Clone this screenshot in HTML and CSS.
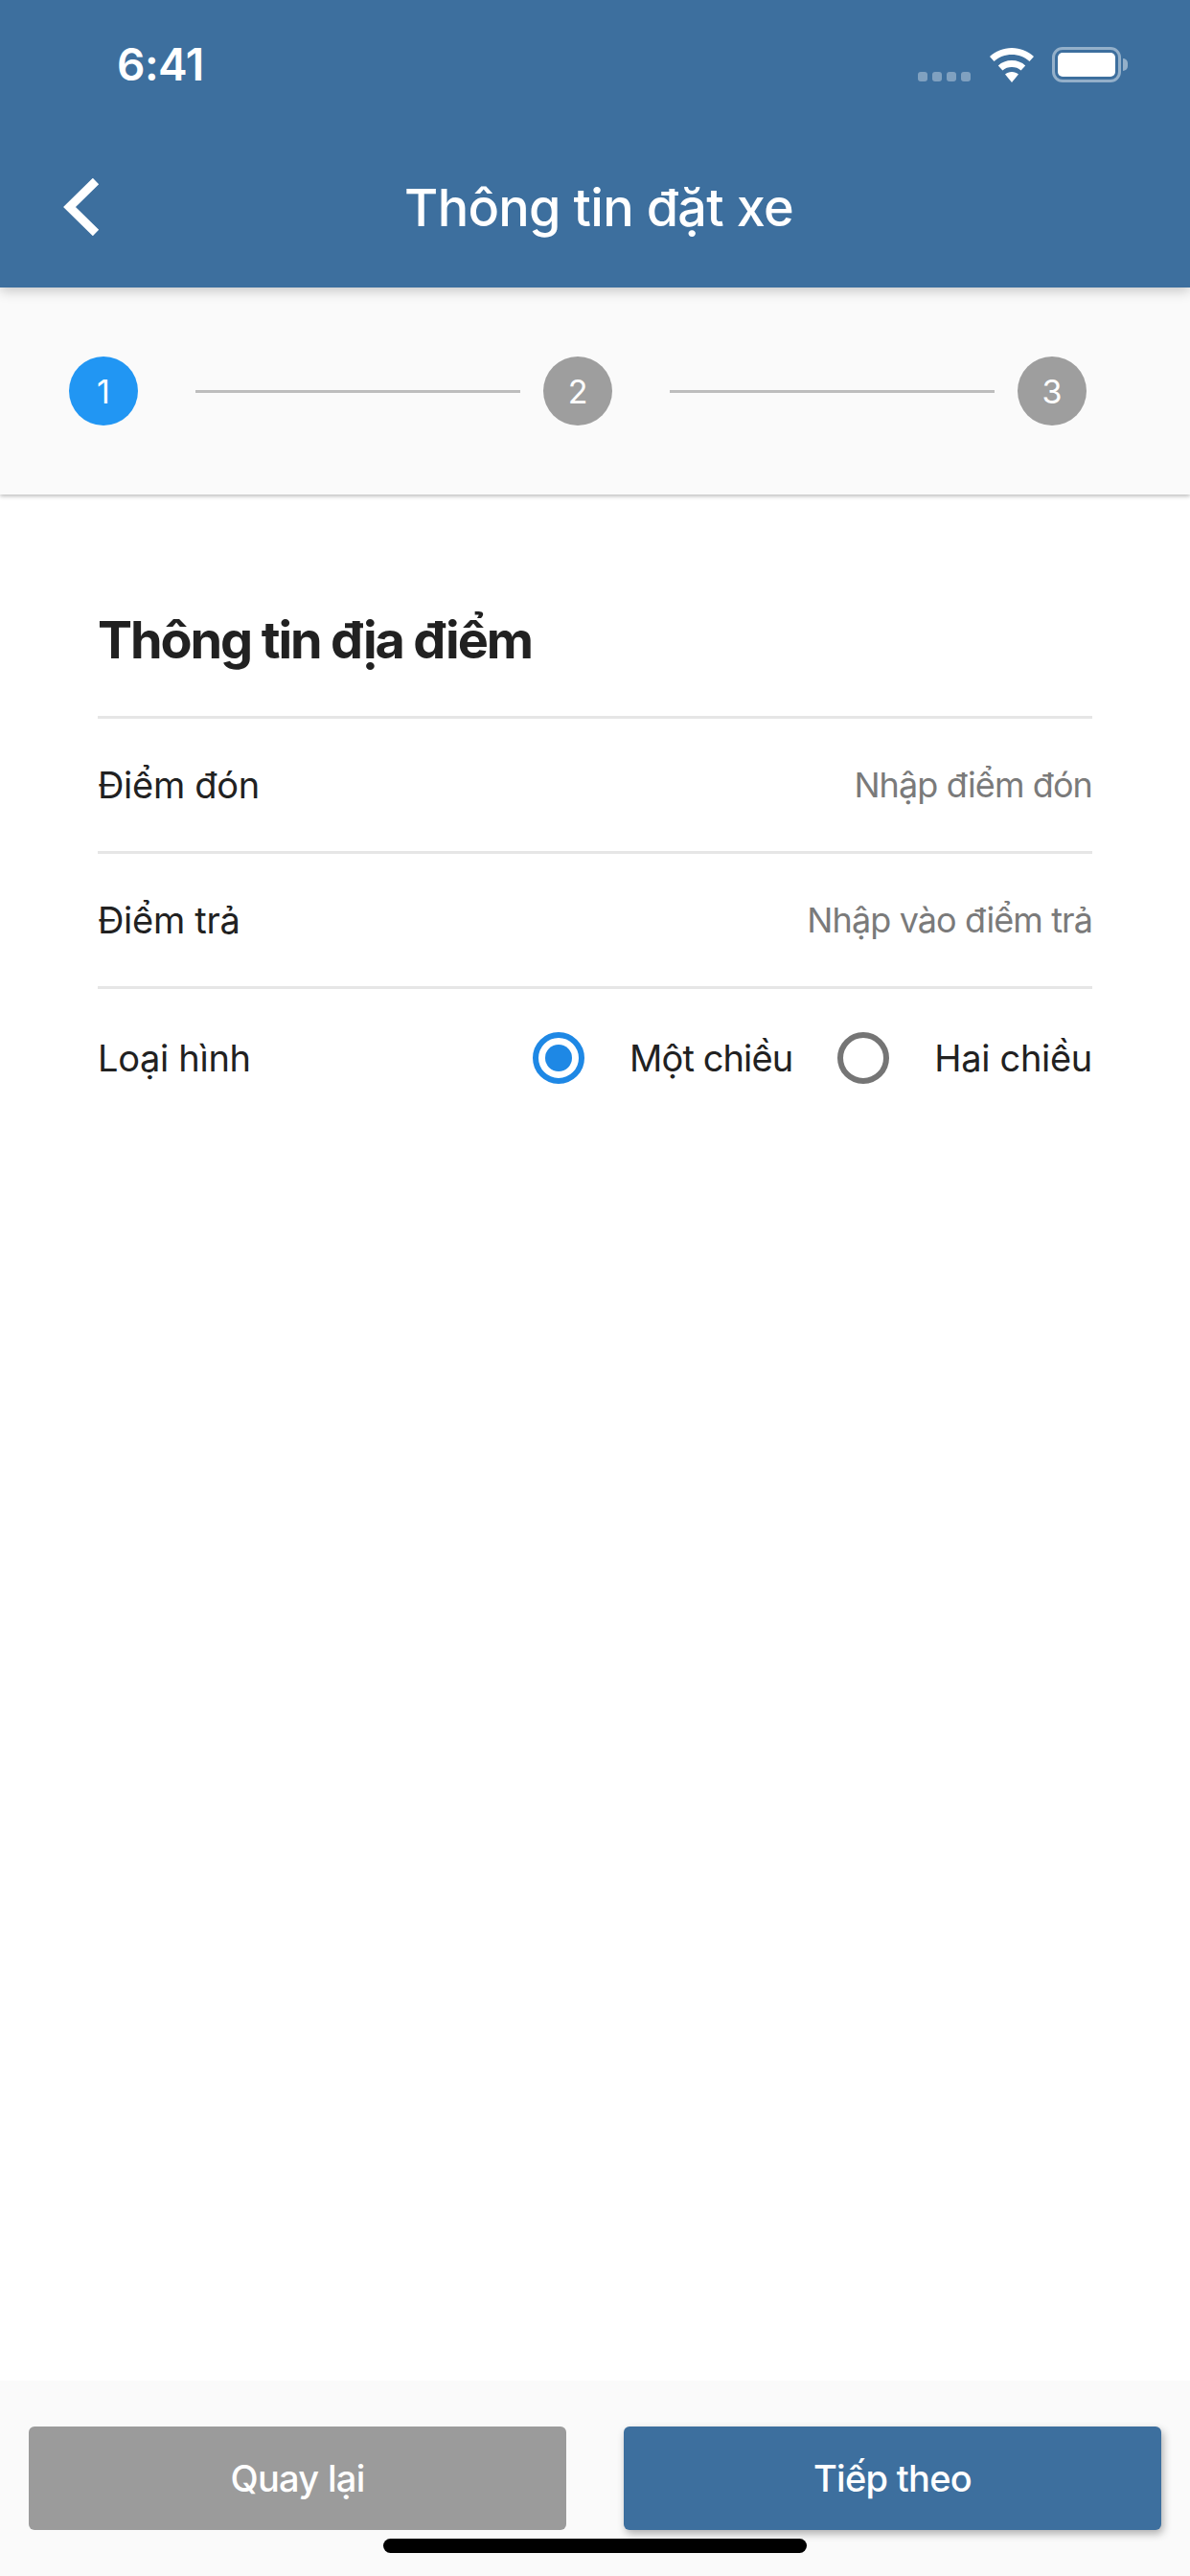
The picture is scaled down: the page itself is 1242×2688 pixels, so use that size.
FILE: index.html
```html
<!DOCTYPE html>
<html lang="vi">
<head>
  <meta charset="UTF-8">
  <title>Thông tin đặt xe</title>
  <link rel="stylesheet" href="styles.css">
</head>
<body>
  <div class="app">
    <header class="header">
      <div class="status-bar">
        <span class="time">6:41</span>
        <div class="status-icons">
          <div class="signal"><i></i><i></i><i></i><i></i></div>
          <svg class="wifi" width="48" height="36" viewBox="0 0 48 36">
            <path d="M24 0C15 0 7 3.500 1 9l4.500 5C10.500 9.500 17 7 24 7s13.500 2.500 18.500 7l4.500-5C41 3.500 33 0 24 0z" fill="#fff"/>
            <path d="M24 13c-5.500 0-10.500 2-14.200 5.400l4.600 5C17 21.200 20.300 20 24 20s7 1.200 9.600 3.400l4.600-5C34.500 15 29.500 13 24 13z" fill="#fff"/>
            <path d="M24 25c-2.700 0-5.200 1-7 2.600L24 36l7-8.400C29.200 26 26.700 25 24 25z" fill="#fff"/>
          </svg>
          <div class="battery"><div class="battery-level"></div></div>
        </div>
      </div>
      <div class="nav-bar">
        <svg class="back" width="40" height="60" viewBox="0 0 40 60">
          <path d="M36 3L8.500 30L36 57" fill="none" stroke="#fff" stroke-width="9"/>
        </svg>
        <h1>Thông tin đặt xe</h1>
      </div>
    </header>

    <div class="stepper">
      <span class="step active">1</span>
      <span class="step-line"></span>
      <span class="step">2</span>
      <span class="step-line"></span>
      <span class="step">3</span>
    </div>

    <main class="content">
      <h2>Thông tin địa điểm</h2>
      <div class="row">
        <span>Điểm đón</span>
        <span class="placeholder">Nhập điểm đón</span>
      </div>
      <div class="row">
        <span>Điểm trả</span>
        <span class="placeholder">Nhập vào điểm trả</span>
      </div>
      <div class="row row-last">
        <span>Loại hình</span>
        <div class="radios">
          <span class="radio checked"></span>
          <span class="radio-label">Một chiều</span>
          <span class="radio"></span>
          <span class="radio-label">Hai chiều</span>
        </div>
      </div>
    </main>

    <footer class="footer">
      <div class="buttons">
        <button class="btn btn-back">Quay lại</button>
        <button class="btn btn-next">Tiếp theo</button>
      </div>
      <div class="home-bar"></div>
    </footer>
  </div>
</body>
</html>
```
FILE: styles.css
```css
* {
  box-sizing: border-box;
}

body {
  margin: 0;
  font-family: Inter, "Noto Sans", sans-serif;
  background: #fff;
  color: #212121;
}

.app {
  width: 1242px;
  height: 2688px;
  display: flex;
  flex-direction: column;
  overflow: hidden;
}

.header {
  height: 300px;
  background: #3d6f9e;
  color: #fff;
  box-shadow: 0 4px 12px rgba(0, 0, 0, 0.2);
  position: relative;
  z-index: 2;
}

.status-bar {
  height: 124px;
  padding: 39px 72px 0 122px;
  display: flex;
  justify-content: space-between;
  align-items: flex-start;
}

.time {
  font-size: 46px;
  font-weight: 600;
  line-height: 56px;
  letter-spacing: -0.5px;
}

.status-icons {
  display: flex;
  align-items: flex-end;
  margin-top: 10px;
}

.signal {
  display: flex;
  gap: 5px;
  margin-right: 19px;
  margin-bottom: 1px;
}

.signal i {
  width: 10px;
  height: 10px;
  border-radius: 3px;
  background: rgba(255, 255, 255, 0.35);
}

.wifi {
  margin-right: 18px;
}

.battery {
  width: 72px;
  height: 37px;
  padding: 3px;
  border: 3px solid rgba(255, 255, 255, 0.45);
  border-radius: 11px;
  position: relative;
}

.battery::after {
  content: "";
  position: absolute;
  right: -10px;
  top: 9px;
  width: 5px;
  height: 13px;
  border-radius: 0 6px 6px 0;
  background: rgba(255, 255, 255, 0.45);
}

.battery-level {
  height: 100%;
  background: #fff;
  border-radius: 5px;
}

.nav-bar {
  height: 176px;
  padding-left: 8px;
  display: flex;
  align-items: center;
  justify-content: center;
  position: relative;
}

.back {
  position: absolute;
  left: 64px;
  top: 62px;
}

.nav-bar h1 {
  margin: 8px 0 0;
  font-size: 54px;
  font-weight: 500;
  letter-spacing: -0.7px;
}

.stepper {
  height: 216px;
  padding: 0 108px 0 72px;
  background: #fafafa;
  box-shadow: 0 2px 4px rgba(0, 0, 0, 0.25);
  display: flex;
  align-items: center;
  justify-content: space-between;
  position: relative;
  z-index: 1;
}

.step {
  width: 72px;
  height: 72px;
  flex: none;
  border-radius: 50%;
  background: #9e9e9e;
  color: #fff;
  font-size: 34px;
  display: flex;
  align-items: center;
  justify-content: center;
}

.step.active {
  background: #2196f3;
}

.step-line {
  width: 339px;
  height: 3px;
  background: #bdbdbd;
  margin: 0 24px 0 60px;
}

.content {
  flex: 1;
  padding: 0 102px;
}

.content h2 {
  margin: 0;
  height: 231px;
  padding-top: 119px;
  font-size: 54px;
  line-height: 66px;
  font-weight: 700;
  letter-spacing: -2.1px;
}

.row {
  height: 141px;
  border-top: 3px solid #e6e6e6;
  display: flex;
  align-items: center;
  justify-content: space-between;
  font-size: 38px;
  letter-spacing: -0.3px;
}

.row-last {
  height: 146px;
}

.placeholder {
  color: #7a7a7a;
  font-size: 36px;
  letter-spacing: -0.9px;
}

.radios {
  display: flex;
  align-items: center;
}

.radio {
  width: 54px;
  height: 54px;
  border: 6px solid #757575;
  border-radius: 50%;
  padding: 7px;
}

.radio.checked {
  border-color: #1e88e5;
}

.radio.checked::before {
  content: "";
  display: block;
  width: 28px;
  height: 28px;
  border-radius: 50%;
  background: #1e88e5;
}

.radio-label {
  margin-left: 47px;
}

.radio-label:nth-child(2) {
  margin-right: 47px;
  letter-spacing: -0.9px;
}

.footer {
  height: 204px;
  background: #fafafa;
  padding: 48px 30px 0;
}

.buttons {
  display: flex;
  justify-content: space-between;
}

.btn {
  width: 561px;
  height: 108px;
  border: none;
  border-radius: 6px;
  color: #fff;
  font-family: inherit;
  font-size: 38px;
  font-weight: 500;
  letter-spacing: -0.7px;
}

.btn-back {
  background: #9b9b9b;
}

.btn-next {
  background: #3d6f9e;
  box-shadow: 2px 4px 8px rgba(0, 0, 0, 0.3);
}

.home-bar {
  width: 442px;
  height: 15px;
  margin: 9px auto 0;
  border-radius: 8px;
  background: #000;
}
```
